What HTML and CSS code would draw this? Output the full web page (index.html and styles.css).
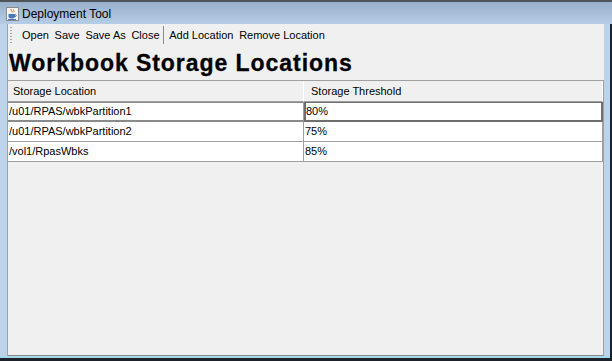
FILE: index.html
```html
<!DOCTYPE html>
<html>
<head>
<meta charset="utf-8">
<link rel="stylesheet" href="styles.css">
</head>
<body>
<div class="window">
  <div class="titlebar">
    <svg class="app-icon" width="13" height="14" viewBox="0 0 13 14">
      <rect x="0.5" y="0.5" width="12" height="13" fill="#f4f4f4" stroke="#8a8a8a"/>
      <path d="M5 2 C4 3.5 7 4 6 5.5 M7.5 2.5 C6.8 3.5 8.6 4 7.8 5.2" stroke="#e07820" stroke-width="1" fill="none"/>
      <path d="M2.5 7 H9 V9.5 C9 11 7.5 11.5 5.8 11.5 C4 11.5 2.5 11 2.5 9.5 Z" fill="#4a78b8"/>
      <path d="M9 7.6 C10.8 7.6 10.8 9.6 9 9.6" stroke="#4a78b8" fill="none"/>
      <rect x="2" y="12" width="8" height="1" fill="#4a78b8"/>
    </svg>
    <span class="title">Deployment Tool</span>
  </div>
  <div class="frame">
    <div class="content">
      <div class="toolbar">
        <span class="grip"></span>
        <span class="tb-item">Open</span>
        <span class="tb-item">Save</span>
        <span class="tb-item">Save As</span>
        <span class="tb-item">Close</span>
        <span class="tb-sep"></span>
        <span class="tb-item">Add Location</span>
        <span class="tb-item">Remove Location</span>
      </div>
      <h1 class="heading">Workbook Storage Locations</h1>
      <div class="scrollpane">
        <div class="grid">
          <div class="hcell">Storage Location</div>
          <div class="hcell h2">Storage Threshold</div>
          <div class="cell c1 first">/u01/RPAS/wbkPartition1</div>
          <div class="cell c2 first focus">80%</div>
          <div class="cell c1">/u01/RPAS/wbkPartition2</div>
          <div class="cell c2">75%</div>
          <div class="cell c1">/vol1/RpasWbks</div>
          <div class="cell c2">85%</div>
        </div>
      </div>
    </div>
  </div>
</div>
</body>
</html>
```
FILE: styles.css
```css
html, body {
  margin: 0;
  padding: 0;
}
body {
  width: 612px;
  height: 361px;
  overflow: hidden;
  font-family: "Liberation Sans", Arial, sans-serif;
  font-size: 11px;
  color: #000;
}
.window {
  width: 612px;
  height: 361px;
  display: flex;
  flex-direction: column;
  box-sizing: border-box;
  background: #bcd3ea;
}
.titlebar {
  height: 24px;
  box-sizing: border-box;
  border-top: 2px solid #505358;
  background: linear-gradient(#98b0cc, #b6cde6);
  display: flex;
  align-items: center;
  padding-left: 6px;
}
.app-icon {
  display: block;
  margin-top: 1px;
}
.title {
  margin-left: 3px;
  font-size: 12px;
  margin-top: 2px;
  color: #000;
}
.frame {
  flex: 1;
  display: flex;
  box-sizing: border-box;
  padding: 0 6px 2px 7px;
  border-right: 2px solid #1c2228;
  border-bottom: 3px solid #1c2228;
  background: #bcd3ea;
  box-shadow: inset 0 -2px 0 #a6d8f0;
}
.content {
  flex: 1;
  display: flex;
  flex-direction: column;
  background: #f0f0f0;
  border-left: 1px solid #9aa4ae;
  min-height: 0;
}
.toolbar {
  height: 22px;
  display: flex;
  align-items: center;
  padding-left: 2px;
}
.grip {
  width: 2px;
  height: 16px;
  margin-right: 10px;
  background: repeating-linear-gradient(#a0a0a0 0 1px, transparent 1px 3px);
}
.tb-item {
  margin-right: 5.7px;
  font-size: 11px;
}
.tb-sep {
  width: 1px;
  height: 18px;
  background: #8c8c8c;
  margin: 0 5px 0 -2px;
}
.heading {
  margin: 0;
  height: 34px;
  line-height: 34px;
  padding-left: 1px;
  font-family: "Liberation Sans", Arial, sans-serif;
  font-weight: bold;
  font-size: 23px;
  letter-spacing: 0.95px;
  color: #000;
  -webkit-text-stroke: 0.3px #000;
}
.scrollpane {
  flex: 1;
  border-right: 1px solid #a0a0a0;
  border-bottom: 1px solid #8a8a8a;
  border-top: 1px solid #a0a0a0;
  background: #f0f0f0;
}
.grid {
  display: grid;
  grid-template-columns: 296px 1fr;
}
.hcell {
  line-height: 20px;
  padding-left: 5px;
  background: #f0f0f0;
  border-right: 1px solid #ffffff;
  border-bottom: 1px solid #a0a0a0;
  box-sizing: border-box;
  height: 21px;
}
.hcell.h2 {
  padding-left: 7px;
}
.cell {
  height: 20px;
  line-height: 19px;
  background: #fff;
  box-sizing: border-box;
  border-bottom: 1px solid #a0a0a0;
  border-right: 1px solid #a0a0a0;
  padding-left: 1px;
}
.cell.first {
  border-bottom: 2px solid #8a8a8a;
}
.cell.first.c1 {
  border-top: 1px solid #8a8a8a;
  line-height: 17px;
}
.cell.focus {
  border-top: 1px solid #6e6e6e;
  border-left: 2px solid #6e6e6e;
  border-right: 2px solid #6e6e6e;
  border-bottom: 2px solid #6e6e6e;
  padding-left: 0;
  line-height: 17px;
}
```
